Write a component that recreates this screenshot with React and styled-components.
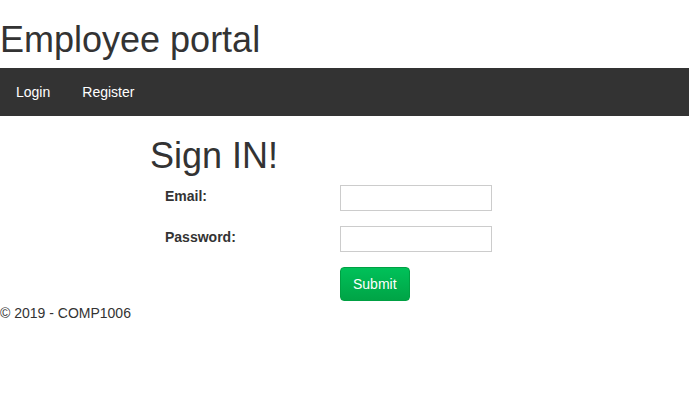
import React from 'react';
import styled, { createGlobalStyle } from 'styled-components';

const GlobalStyle = createGlobalStyle`
  html, body { margin: 0; padding: 0; background: #fff; }
  body {
    font-family: "Liberation Sans", Arial, Helvetica, sans-serif;
    font-size: 14px;
    line-height: 1.42857;
    color: #333;
  }
`;

const SiteTitle = styled.h1`
  margin: 0;
  padding-top: 20px;
  height: 68px;
  box-sizing: border-box;
  font-size: 36px;
  font-weight: 400;
  line-height: 1.1;
  color: #333;
`;

const NavBar = styled.nav`
  display: flex;
  align-items: center;
  height: 48px;
  background: #333;
  padding-left: 1px;
`;

const NavLink = styled.a`
  padding: 0 15px;
  color: #fff;
  text-decoration: none;
  font-size: 14px;
  line-height: 48px;
  margin-right: 2px;
`;

const Main = styled.main`
  padding: 20px 0 0 150px;
`;

const Heading = styled.h2`
  margin: 0;
  font-size: 36px;
  font-weight: 400;
  line-height: 1.1;
  color: #333;
`;

const Form = styled.form`
  display: grid;
  grid-template-columns: 175px 152px;
  row-gap: 15px;
  margin-top: 9px;
  padding-left: 15px;
`;

const Label = styled.label`
  font-weight: 700;
  font-size: 14px;
  line-height: 20px;
  padding-top: 1px;
`;

const Input = styled.input`
  box-sizing: border-box;
  width: 152px;
  height: 26px;
  border: 1px solid #ccc;
  margin: 0;
  padding: 2px 6px;
  font: inherit;
`;

const SubmitButton = styled.button`
  grid-column: 2;
  justify-self: start;
  height: 34px;
  padding: 0 12px;
  border: 1px solid #00a043;
  border-radius: 4px;
  background: linear-gradient(#00c159, #00a446);
  color: #fff;
  font-family: inherit;
  font-size: 14px;
`;

const Footer = styled.footer`
  margin-top: 3px;
  font-size: 14px;
  color: #333;
`;

export default function App() {
  return (
    <>
      <GlobalStyle />
      <SiteTitle>Employee portal</SiteTitle>
      <NavBar>
        <NavLink href="#">Login</NavLink>
        <NavLink href="#">Register</NavLink>
      </NavBar>
      <Main>
        <Heading>Sign IN!</Heading>
        <Form onSubmit={e => e.preventDefault()}>
          <Label htmlFor="email">Email:</Label>
          <Input id="email" type="text" />
          <Label htmlFor="password">Password:</Label>
          <Input id="password" type="password" />
          <SubmitButton type="submit">Submit</SubmitButton>
        </Form>
      </Main>
      <Footer>© 2019 - COMP1006</Footer>
    </>
  );
}
